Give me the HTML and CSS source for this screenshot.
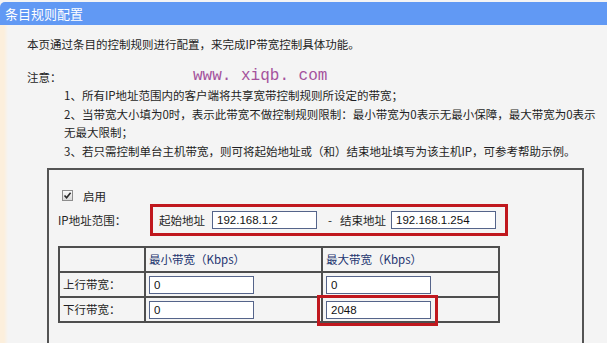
FILE: index.html
```html
<!DOCTYPE html>
<html lang="zh-CN">
<head>
<meta charset="utf-8">
<title>条目规则配置</title>
<link rel="stylesheet" href="styles.css">
</head>
<body>
<div class="header">条目规则配置</div>
<div class="content">
  <p class="intro">本页通过条目的控制规则进行配置，来完成IP带宽控制具体功能。</p>
  <div class="notes">
    <div class="note-title">注意：</div>
    <span class="watermark">www. xiqb. com</span>
    <ul class="note-list">
      <li>1、所有IP地址范围内的客户端将共享宽带控制规则所设定的带宽；</li>
      <li>2、当带宽大小填为0时，表示此带宽不做控制规则限制：最小带宽为0表示无最小保障，最大带宽为0表示无最大限制；</li>
      <li>3、若只需控制单台主机带宽，则可将起始地址或（和）结束地址填写为该主机IP，可参考帮助示例。</li>
    </ul>
  </div>
  <div class="rule-box">
    <div class="enable-row">
      <span class="checkbox"><svg width="9" height="9" viewBox="0 0 9 9"><path d="M1.5 4.5 L3.6 6.8 L7.6 1.8" fill="none" stroke="#2a2a2a" stroke-width="1.6"/></svg></span>
      <span>启用</span>
    </div>
    <div class="range-row">
      <span class="range-label">IP地址范围：</span>
      <div class="range-fields">
        <span>起始地址</span>
        <input class="field ip-start" type="text" value="192.168.1.2">
        <span class="dash">-</span>
        <span>结束地址</span>
        <input class="field ip-end" type="text" value="192.168.1.254">
      </div>
    </div>
    <table class="bw-table">
      <colgroup><col class="c-label"><col class="c-val"><col class="c-val"></colgroup>
      <tr class="head-row"><td></td><td class="th">最小带宽（Kbps）</td><td class="th">最大带宽（Kbps）</td></tr>
      <tr><td>上行带宽：</td><td><input class="field" type="text" value="0"></td><td><input class="field" type="text" value="0"></td></tr>
      <tr><td>下行带宽：</td><td><input class="field" type="text" value="0"></td><td><span class="mark"><input class="field" type="text" value="2048"></span></td></tr>
    </table>
  </div>
</div>
</body>
</html>
```

FILE: styles.css
```css
* { box-sizing: border-box; }
html, body { margin: 0; padding: 0; }
body {
  width: 607px;
  height: 343px;
  overflow: hidden;
  background: #f4f4f4;
  font-family: "Noto Sans CJK SC", "Noto Sans", sans-serif;
  font-size: 11.5px;
  color: #1f1f24;
}
.header {
  margin-top: 2px;
  height: 23px;
  line-height: 23px;
  background: #6199f4;
  color: #fff;
  font-size: 13px;
  padding-left: 5px;
  border-top-left-radius: 5px;
}
.content {
  background: linear-gradient(to right, #fcefdc 0, #fcefdc 4px, #f4f4f4 8px);
  padding-left: 27px;
  height: 318px;
  overflow: hidden;
}
.intro {
  margin: 10px 0 0;
  line-height: 18.7px;
}
.notes {
  position: relative;
  margin-top: 14px;
  line-height: 18.6px;
}
.watermark {
  position: absolute;
  left: 166px;
  top: -1px;
  font-family: "Liberation Mono", monospace;
  font-size: 16px;
  line-height: 18px;
  color: #a4529c;
}
.note-list {
  list-style: none;
  margin: 0;
  padding-left: 37px;
  width: 574px;
}
.rule-box {
  margin-top: 7px;
  margin-left: 20px;
  width: 537px;
  border: 2px solid #545454;
  border-bottom: none;
  padding: 18px 9px 20px;
}
.enable-row {
  display: flex;
  align-items: center;
  height: 16px;
}
.checkbox {
  width: 11px;
  height: 11px;
  margin-left: 4px;
  margin-right: 10px;
  border: 1px solid #8d8d8d;
  background: linear-gradient(#fafafa, #d9d9d9);
  display: flex;
  align-items: center;
  justify-content: center;
}
.range-row {
  display: flex;
  align-items: center;
}
.range-label {
  width: 92px;
}
.range-fields {
  display: flex;
  align-items: center;
  height: 32px;
  border: 3px solid #c0181e;
  padding: 0 9px 0 6px;
}
.field {
  width: 105px;
  height: 18px;
  border: 1px solid #55648a;
  background: #fff;
  font-family: "Liberation Sans", Arial, sans-serif;
  font-size: 11.5px;
  color: #111;
  padding: 0 4px;
  margin: 0;
}
.ip-start { margin-left: 7px; }
.dash { margin: 0 8px 0 11px; }
.ip-end { margin-left: 5px; }
.bw-table {
  margin-top: 10px;
  border-collapse: collapse;
  width: 440px;
  table-layout: fixed;
}
.c-label { width: 86px; }
.c-val { width: 177px; }
.bw-table td {
  border: 2px solid #4e4e4e;
  height: 25px;
  padding: 0 3px;
}
.bw-table .th {
  color: #1d3470;
}
.mark {
  position: relative;
  display: inline-block;
  vertical-align: middle;
}
.mark .field { display: block; }
.mark::after {
  content: "";
  position: absolute;
  left: -9px;
  right: -7px;
  top: -6px;
  bottom: -7px;
  border: 3px solid #c0181e;
}
.bw-table .field { vertical-align: middle; }
```
